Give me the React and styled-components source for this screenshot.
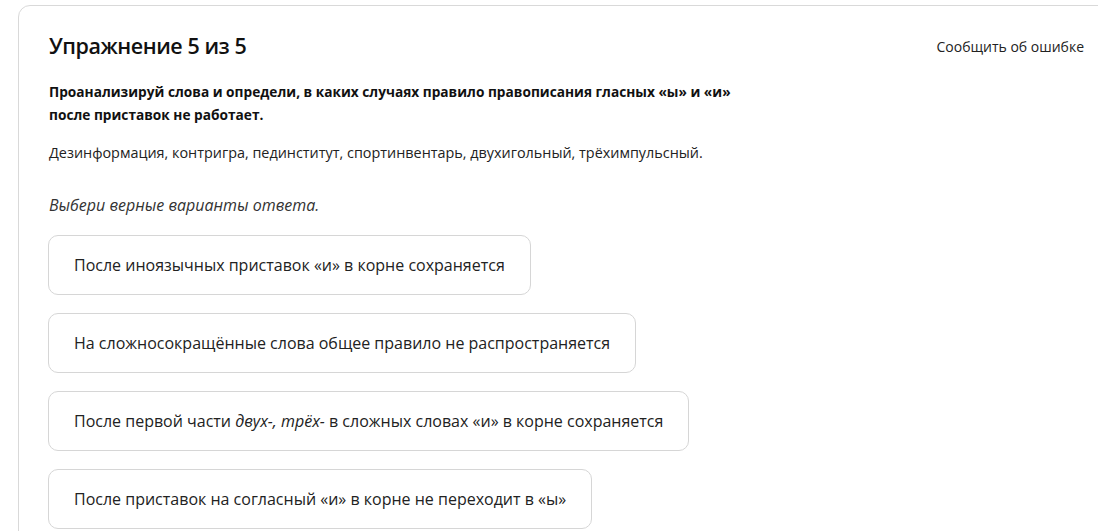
import React from "react";
import styled, { createGlobalStyle } from "styled-components";

const GlobalStyle = createGlobalStyle`
  body {
    margin: 0;
    background: #ffffff;
    font-family: "Open Sans", "Noto Sans", sans-serif;
    color: #1f1f1f;
    overflow: hidden;
  }
`;

const Page = styled.div`
  padding: 5px 0 0 18px;
`;

const Card = styled.section`
  width: 1100px;
  box-sizing: border-box;
  border: 1px solid #d9d9d9;
  border-radius: 12px;
  padding: 25px 33px 40px 30px;
  background: #fff;
`;

const Header = styled.div`
  display: flex;
  justify-content: space-between;
  align-items: center;
  height: 30px;
`;

const Title = styled.h1`
  margin: 0;
  font-size: 21.5px;
  font-weight: 600;
  line-height: 30px;
  letter-spacing: -0.45px;
  color: #111;
`;

const ReportLink = styled.a`
  font-size: 14px;
  color: #222;
  text-decoration: none;
  cursor: pointer;
`;

const Task = styled.p`
  margin: 19px 0 0;
  max-width: 700px;
  font-size: 13.7px;
  font-weight: 700;
  line-height: 23px;
  color: #111;
`;

const Words = styled.p`
  margin: 15px 0 0;
  font-size: 14.4px;
  line-height: 23px;
  color: #222;
`;

const Hint = styled.p`
  margin: 29px 0 0;
  font-size: 16px;
  font-style: italic;
  line-height: 24px;
  color: #333;
`;

const Options = styled.div`
  display: flex;
  flex-direction: column;
  align-items: flex-start;
  gap: 18px;
  margin: 18px 0 0 -1px;
`;

const Option = styled.button`
  display: inline-flex;
  align-items: center;
  height: 60px;
  box-sizing: border-box;
  padding: 0 25px;
  border: 1px solid #d6d6d6;
  border-radius: 10px;
  background: #fff;
  font-family: inherit;
  font-size: 16px;
  color: #222;
  cursor: pointer;
  white-space: nowrap;
`;

const Label = styled.span`
  em {
    font-style: italic;
  }
`;

const options = [
  <>После иноязычных приставок «и» в корне сохраняется</>,
  <>На сложносокращённые слова общее правило не распространяется</>,
  <>
    После первой части <em>двух-, трёх-</em> в сложных словах «и» в корне
    сохраняется
  </>,
  <>После приставок на согласный «и» в корне не переходит в «ы»</>,
];

export default function App() {
  return (
    <>
      <GlobalStyle />
      <Page>
        <Card>
          <Header>
            <Title>Упражнение 5 из 5</Title>
            <ReportLink>Сообщить об ошибке</ReportLink>
          </Header>
          <Task>
            Проанализируй слова и определи, в каких случаях правило правописания
            гласных «ы» и «и» после приставок не работает.
          </Task>
          <Words>
            Дезинформация, контригра, пединститут, спортинвентарь, двухигольный,
            трёхимпульсный.
          </Words>
          <Hint>Выбери верные варианты ответа.</Hint>
          <Options>
            {options.map((text, i) => (
              <Option key={i}>
                <Label>{text}</Label>
              </Option>
            ))}
          </Options>
        </Card>
      </Page>
    </>
  );
}
